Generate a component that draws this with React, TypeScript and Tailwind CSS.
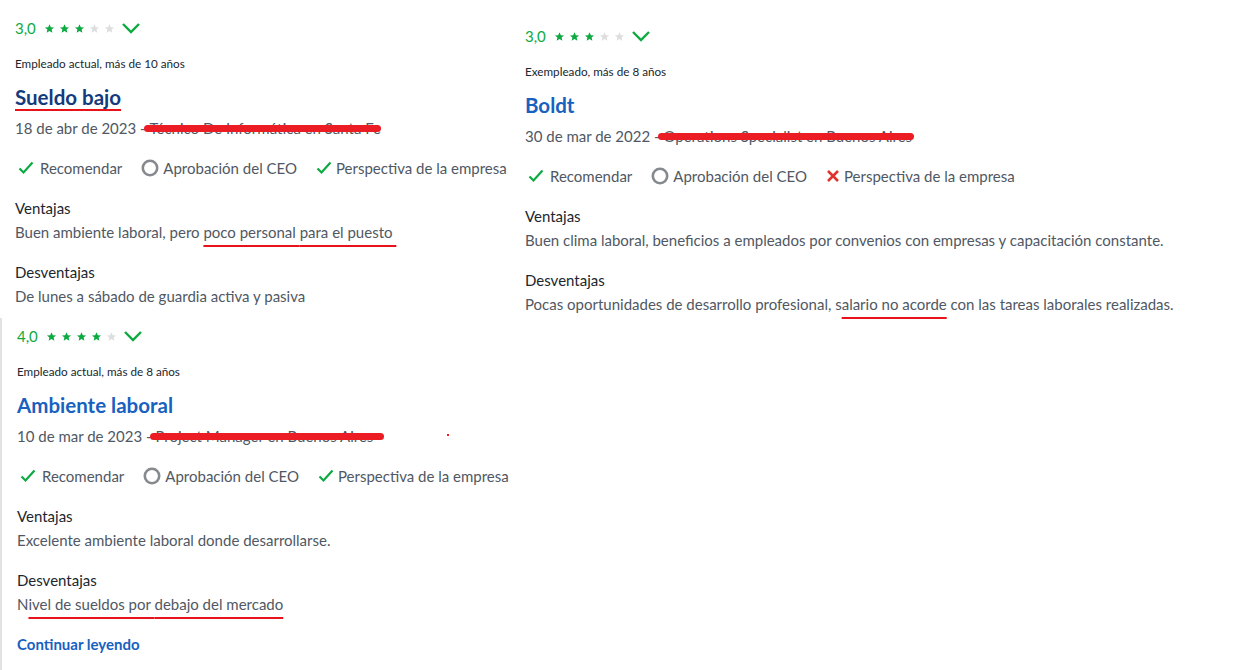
import React from "react";

const GREEN = "#0caa41";

function Stars({ n }: { n: number }) {
  return (
    <div className="flex items-center gap-[4px] ml-[8px]">
      {[0, 1, 2, 3, 4].map((i) => (
        <svg key={i} width="11" height="11" viewBox="0 0 24 24">
          <path
            d="M12 2.5l2.9 6.6 7.1.6-5.4 4.7 1.6 7-6.2-3.7-6.2 3.7 1.6-7L2 9.7l7.1-.6z"
            fill={i < n ? GREEN : "#dedede"}
          />
        </svg>
      ))}
    </div>
  );
}

function Chevron() {
  return (
    <svg width="20" height="12" viewBox="0 0 20 12" className="ml-[6px]">
      <path d="M2 2l8 8 8-8" fill="none" stroke={GREEN} strokeWidth="2.4" />
    </svg>
  );
}

function Check() {
  return (
    <svg width="16" height="14" viewBox="0 0 16 14">
      <path d="M1.5 7.5l4 4 9-10" fill="none" stroke={GREEN} strokeWidth="2.2" />
    </svg>
  );
}

function Circle() {
  return (
    <svg width="18" height="18" viewBox="0 0 18 18">
      <circle cx="9" cy="9" r="7.2" fill="none" stroke="#868a8f" strokeWidth="2.6" />
    </svg>
  );
}

function Cross() {
  return (
    <svg width="14" height="14" viewBox="0 0 14 14">
      <path d="M2 2l10 10M12 2L2 12" fill="none" stroke="#e0332d" strokeWidth="2.6" />
    </svg>
  );
}

function Red({ children }: { children: React.ReactNode }) {
  return (
    <span className="underline decoration-[#e8121b] decoration-[1.5px] underline-offset-[7px]">
      {children}
    </span>
  );
}

type Review = {
  rating: string;
  stars: number;
  status: string;
  title: React.ReactNode;
  titleClass: string;
  date: string;
  job: string;
  scribble: number;
  dot?: boolean;
  persp: "check" | "cross";
  pros: React.ReactNode;
  cons: React.ReactNode;
  more?: boolean;
};

function ReviewBlock({ r }: { r: Review }) {
  return (
    <div className="flex flex-col">
      <div className="h-[20px] flex items-center">
        <span className="text-[15px] text-[#0caa41] font-normal leading-none">{r.rating}</span>
        <Stars n={r.stars} />
        <Chevron />
      </div>
      <div className="mt-[18px] h-[16px] flex items-center text-[11.7px] text-[#20262e]">{r.status}</div>
      <div className={"mt-[11px] h-[28px] flex items-center text-[20.5px] font-bold " + r.titleClass}>
        {r.title}
      </div>
      <div className="mt-[7px] h-[20px] flex items-center text-[15px] text-[#505863] whitespace-nowrap">
        <span>{r.date} -&nbsp;</span>
        <span className="relative">
          {r.job}
          <span
            className="absolute left-[-5px] top-[8px] h-[7px] rounded-full bg-[#ec1c24]"
            style={{ width: r.scribble }}
          />
        </span>
        {r.dot && <span className="ml-[74px] mt-[-2px] w-[2px] h-[2px] bg-[#ec1c24]" />}
      </div>
      <div className="mt-[18px] h-[24px] flex items-center text-[15px] text-[#505863] whitespace-nowrap">
        <span className="ml-[3px] flex items-center gap-[6px]">
          <Check />
          Recomendar
        </span>
        <span className="ml-[19px] flex items-center gap-[4px]">
          <Circle />
          Aprobación del CEO
        </span>
        <span className="ml-[19px] flex items-center gap-[4px]">
          {r.persp === "check" ? <Check /> : <Cross />}
          Perspectiva de la empresa
        </span>
      </div>
      <div className="mt-[18px] h-[20px] flex items-center text-[15px] text-[#20262e]">Ventajas</div>
      <div className="mt-[4px] h-[20px] flex items-center text-[15px] text-[#505863] whitespace-pre">{r.pros}</div>
      <div className="mt-[20px] h-[20px] flex items-center text-[15px] text-[#20262e]">Desventajas</div>
      <div className="mt-[4px] h-[20px] flex items-center text-[15px] text-[#505863] whitespace-pre">{r.cons}</div>
      {r.more && (
        <div className="mt-[20px] h-[20px] flex items-center text-[15px] font-bold text-[#1861bf]">
          Continuar leyendo
        </div>
      )}
    </div>
  );
}

const r1: Review = {
  rating: "3,0",
  stars: 3,
  status: "Empleado actual, más de 10 años",
  title: (
    <span className="underline decoration-[#e8121b] decoration-[1.5px] underline-offset-[4px]">Sueldo bajo </span>
  ),
  titleClass: "text-[#133b7d]",
  date: "18 de abr de 2023",
  job: "Técnico De Informática en Santa Fe",
  scribble: 237,
  persp: "check",
  pros: (
    <>
      Buen ambiente laboral, pero <Red>poco personal </Red>
      <Red>para el puesto </Red>
    </>
  ),
  cons: <>De lunes a sábado de guardia activa y pasiva</>,
};

const r2: Review = {
  rating: "3,0",
  stars: 3,
  status: "Exempleado, más de 8 años",
  title: "Boldt",
  titleClass: "text-[#1861bf]",
  date: "30 de mar de 2022",
  job: "Operations Specialist en Buenos Aires",
  scribble: 256,
  persp: "cross",
  pros: <>Buen clima laboral, beneficios a empleados por convenios con empresas y capacitación constante.</>,
  cons: (
    <>
      Pocas oportunidades de desarrollo profesional, s<Red>alario no acorde</Red> con las tareas laborales realizadas.
    </>
  ),
};

const r3: Review = {
  rating: "4,0",
  stars: 4,
  status: "Empleado actual, más de 8 años",
  title: "Ambiente laboral",
  titleClass: "text-[#1861bf]",
  date: "10 de mar de 2023",
  job: "Project Manager en Buenos Aires",
  scribble: 234,
  dot: true,
  persp: "check",
  pros: <>Excelente ambiente laboral donde desarrollarse.</>,
  cons: (
    <>
      N<Red>ivel de sueldos por </Red>
      <Red>debajo del mercado</Red>
    </>
  ),
  more: true,
};

export default function App() {
  return (
    <div
      className="w-[1233px] h-[670px] bg-white overflow-hidden flex"
      style={{ fontFamily: "Lato, 'Open Sans', sans-serif" }}
    >
      <div className="w-[510px] flex flex-col">
        <div className="pl-[15px] pt-[18px]">
          <ReviewBlock r={r1} />
        </div>
        <div className="mt-[12px] border-l-2 border-[#e2e2e2] pl-[15px] pt-[8px] pb-[20px]">
          <ReviewBlock r={r3} />
        </div>
      </div>
      <div className="pl-[15px] pt-[26px]">
        <ReviewBlock r={r2} />
      </div>
    </div>
  );
}
